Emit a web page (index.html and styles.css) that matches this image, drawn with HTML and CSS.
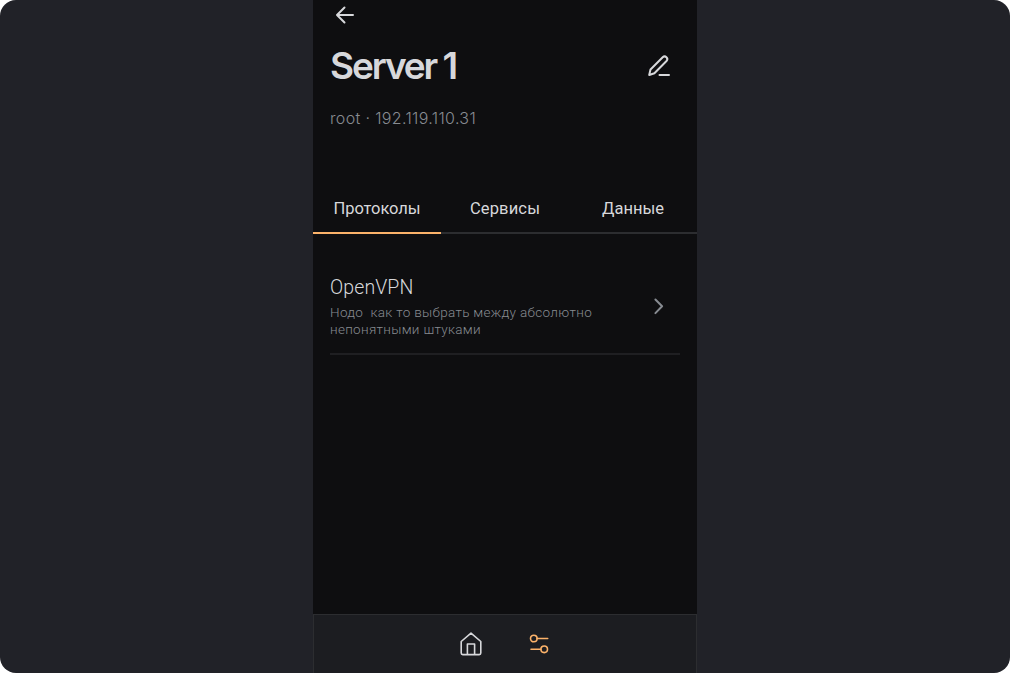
FILE: index.html
```
<!DOCTYPE html>
<html lang="ru">
<head>
<meta charset="utf-8">
<title>Server 1</title>
<link rel="stylesheet" href="styles.css">
</head>
<body>
<div class="stage">
  <main class="phone">
    <header class="header">
      <svg class="back" width="24" height="24" viewBox="0 0 24 24"><path d="M20 12H4M11.500 4.500L4 12L11.500 19.500"/></svg>
      <div class="title-row">
        <h1 class="title">Server 1</h1>
        <svg class="edit" width="24" height="24" viewBox="0 0 24 24"><path d="M2.200 21L3.500 15.500L15.700 3.300C18.200 0.900 21.900 4.400 19.500 7L7.400 19.200L2.200 21ZM12.500 21H22"/></svg>
      </div>
      <p class="address">root · 192.119.110.31</p>
    </header>
    <nav class="tabs">
      <a class="tab tab-active"><span class="label-protocols">Протоколы</span></a>
      <a class="tab"><span class="label-services">Сервисы</span></a>
      <a class="tab"><span class="label-data">Данные</span></a>
    </nav>
    <section class="list">
      <article class="item">
        <div class="item-text">
          <h2 class="item-title">OpenVPN</h2>
          <p class="item-desc"><span class="line-one">Нодо&nbsp; как то выбрать между абсолютно</span><br><span class="line-two">непонятными штуками</span></p>
        </div>
        <svg class="chevron" width="24" height="24" viewBox="0 0 24 24"><path d="M9.400 5.500L16.100 12.300L9.400 19.100"/></svg>
      </article>
    </section>
    <footer class="bottom-bar">
      <svg class="home" width="24" height="24" viewBox="0 0 24 24"><path d="M2.200 9.500L12 1.200L21.800 9.500V21C21.800 22 21.200 22.600 20.200 22.600H3.800C2.800 22.600 2.200 22 2.200 21ZM8.400 22.600V12H15.600V22.600"/></svg>
      <svg class="sliders" width="24" height="24" viewBox="0 0 24 24"><circle cx="6.800" cy="6.500" r="3.300"/><path d="M10.100 6.500H20.700M4 17.300H13.900"/><circle cx="17.200" cy="17.300" r="3.300"/></svg>
    </footer>
  </main>
</div>
</body>
</html>
```
FILE: styles.css
```
* { box-sizing: border-box; }
body { margin: 0; background: #fff; font-family: Inter, Roboto, "Liberation Sans", sans-serif; }
h1, h2, p { margin: 0; }
svg { display: block; flex: none; fill: none; stroke-linecap: round; stroke-linejoin: round; }
.stage { display: flex; justify-content: center; width: 1010px; height: 673px; border-radius: 16px; background: #212228; overflow: hidden; }
.phone { display: flex; flex-direction: column; width: 384px; height: 673px; background: #0e0e10; color: #d7d8db; }
.header { height: 184px; padding: 3px 26px 0 17px; }
.back { margin-left: 3px; stroke: #d7d8db; stroke-width: 2; }
.title-row { display: flex; align-items: center; justify-content: space-between; height: 44px; margin-top: 17px; }
.title { font-size: 37px; line-height: 44px; font-weight: 600; letter-spacing: -2.1px; word-spacing: -1px; white-space: nowrap; }
.edit { stroke: #d7d8db; stroke-width: 2; }
.address { margin-top: 18px; font-size: 16px; line-height: 24px; font-weight: 300; letter-spacing: 0.35px; color: #878b91; white-space: nowrap; }
.tabs { display: flex; height: 50px; }
.tab { display: flex; flex: 1; justify-content: center; padding-top: 13px; border-bottom: 2px solid #2c2d30; font: 400 16.5px/24px Roboto, sans-serif; }
.label-protocols { letter-spacing: -0.1px; }
.label-services { letter-spacing: 0.15px; }
.tab-active { border-bottom-color: #fbb26a; }
.list { flex: 1; padding: 40px 17px 0; }
.item { display: flex; justify-content: space-between; height: 81px; border-bottom: 2px solid #1f1f22; }
.item-title { padding-top: 1px; font: 300 19.5px/26px Roboto, sans-serif; letter-spacing: 0.1px; }
.item-desc { margin-top: 3px; font: 300 13.5px/17px Roboto, sans-serif; letter-spacing: 0.32px; color: #878b91; white-space: nowrap; }
.chevron { margin: 20px 10px 0 0; stroke: #878b91; stroke-width: 2; }
.bottom-bar { display: flex; justify-content: center; gap: 44px; height: 59px; padding: 17px 1px 0 0; background: #1c1d21; border: 1px solid #2c2d30; border-bottom: 0; }
.home { stroke: #d7d8db; stroke-width: 1.6; }
.sliders { stroke: #fbb26a; stroke-width: 1.6; }
```
